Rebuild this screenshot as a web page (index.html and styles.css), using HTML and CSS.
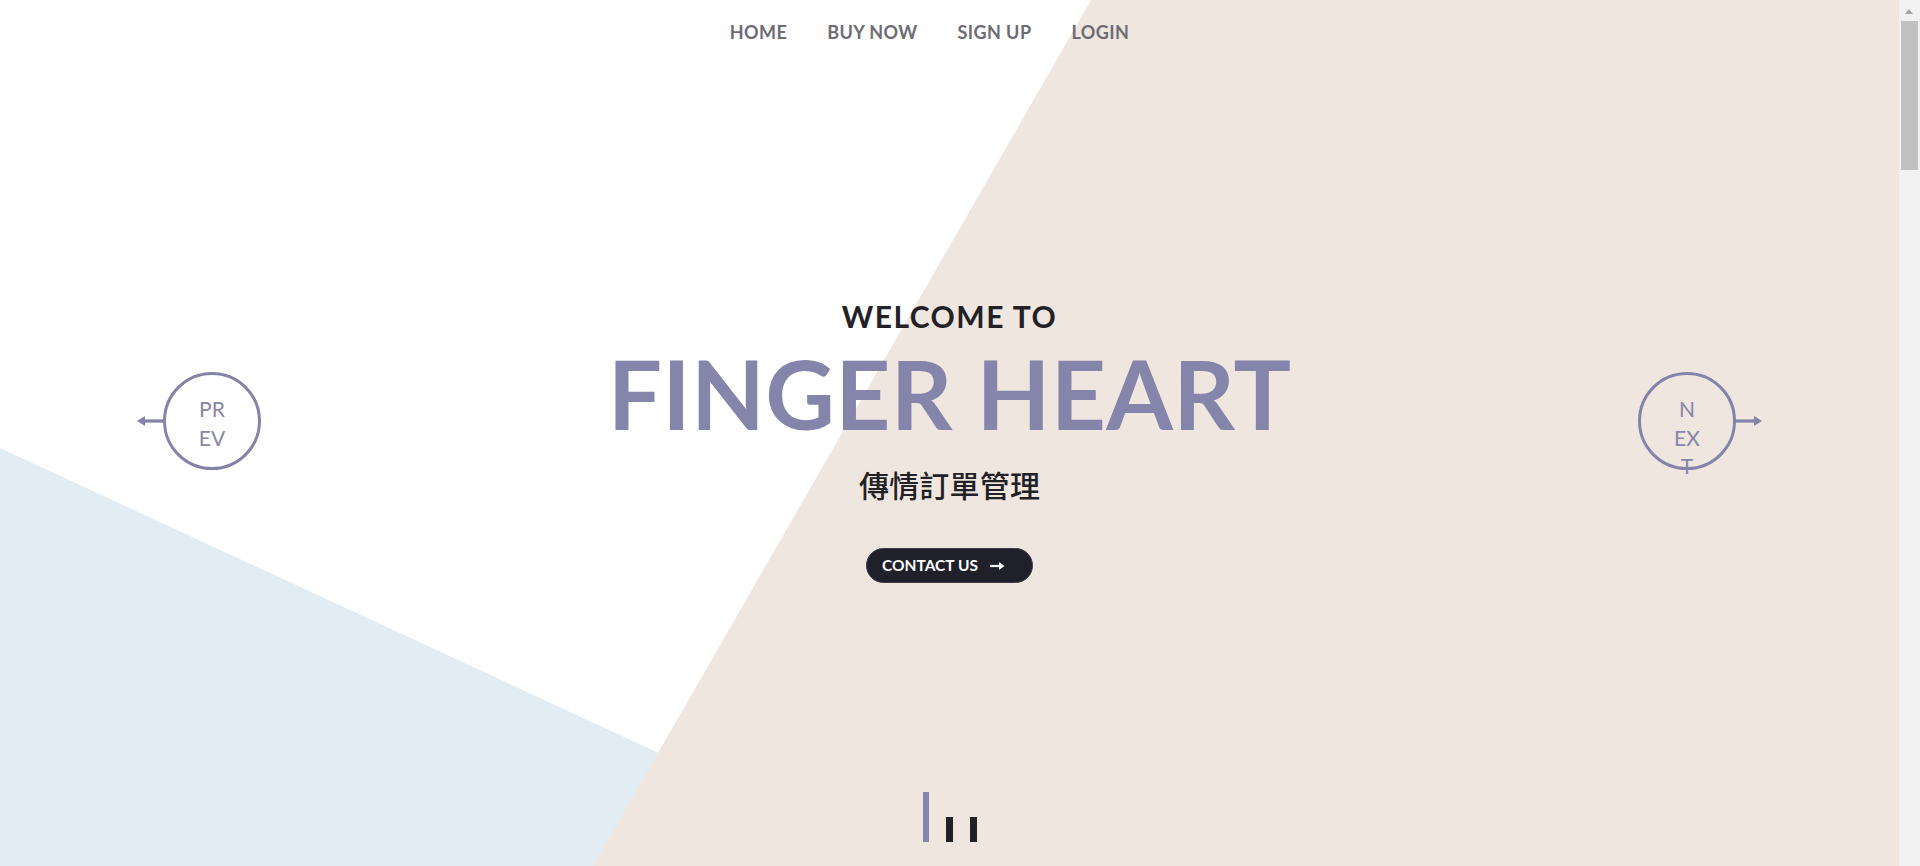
FILE: index.html
```html
<!DOCTYPE html>
<html lang="zh-Hant">
<head>
<meta charset="utf-8">
<title>Finger Heart</title>
<link rel="stylesheet" href="styles.css">
</head>
<body>
<div class="page">
<main class="hero">
  <nav class="nav">
    <ul class="nav-list">
      <li class="nav-item"><a class="nav-link" href="#">HOME</a></li>
      <li class="nav-item"><a class="nav-link" href="#">BUY NOW</a></li>
      <li class="nav-item"><a class="nav-link" href="#">SIGN UP</a></li>
      <li class="nav-item"><a class="nav-link" href="#">LOGIN</a></li>
    </ul>
  </nav>

  <div class="slide">
    <h2 class="welcome">WELCOME TO</h2>
    <h1 class="title">FINGER HEART</h1>
    <p class="subtitle">傳情訂單管理</p>
    <a class="btn" href="#"><span class="btn-text">CONTACT US</span>
      <svg class="btn-arrow" width="15" height="10" viewBox="0 0 15 10"><path d="M0 5H11" stroke="#fff" stroke-width="2.2"/><path d="M9 1L14.5 5L9 9Z" fill="#fff"/></svg>
    </a>
  </div>

  <a class="ctrl ctrl-prev" href="#">
    <svg class="ctrl-arrow" width="28" height="12" viewBox="0 0 28 12"><path d="M7 6H28" stroke="#8583a9" stroke-width="3.2"/><path d="M0 6L8 1V11Z" fill="#8583a9"/></svg>
    <span class="ctrl-text"><span class="ctrl-line">PR</span><span class="ctrl-line">EV</span></span>
  </a>
  <a class="ctrl ctrl-next" href="#">
    <span class="ctrl-text"><span class="ctrl-line">N</span><span class="ctrl-line">EX</span><span class="ctrl-line">T</span></span>
    <svg class="ctrl-arrow" width="28" height="12" viewBox="0 0 28 12"><path d="M0 6H21" stroke="#8583a9" stroke-width="3.2"/><path d="M28 6L20 1V11Z" fill="#8583a9"/></svg>
  </a>

  <div class="dots">
    <span class="dot dot-active"></span>
    <span class="dot"></span>
    <span class="dot"></span>
  </div>
</main>
<aside class="scrollbar" aria-hidden="true">
  <span class="sb-arrow"></span>
  <span class="sb-thumb"></span>
</aside>
</div>
</body>
</html>
```

FILE: styles.css
```css
html, body {
  margin: 0;
  padding: 0;
}
body {
  font-family: "Lato", "Noto Sans CJK TC", sans-serif;
  background: #ffffff;
  color: #222226;
  overflow: hidden;
}
.page {
  display: flex;
  height: 866px;
}
.hero {
  position: relative;
  flex: 1;
  height: 866px;
  overflow: hidden;
  background: #ffffff;
}
.hero::before,
.hero::after {
  content: "";
  position: absolute;
  inset: 0;
  pointer-events: none;
}
.hero::before {
  background: #e1edf3;
  clip-path: polygon(0 448px, 903px 866px, 0 866px);
}
.hero::after {
  background: #efe6df;
  clip-path: polygon(1091px 0, 100% 0, 100% 100%, 593px 100%);
}
.nav,
.slide,
.ctrl,
.dots {
  position: relative;
  z-index: 1;
}
.nav {
  padding-top: 20px;
}
.nav-list {
  list-style: none;
  margin: 0;
  padding: 0;
  display: flex;
  justify-content: center;
}
.nav-item {
  margin-right: 40px;
}
.nav-link {
  display: block;
  font-size: 18px;
  line-height: 24px;
  font-weight: 700;
  color: #6d6c74;
  text-decoration: none;
  letter-spacing: 0.4px;
}
.slide {
  display: flex;
  flex-direction: column;
  align-items: center;
  padding-top: 254px;
}
.welcome {
  margin: 0;
  font-size: 30px;
  line-height: 36px;
  font-weight: 700;
  letter-spacing: 1.5px;
  color: #222226;
}
.title {
  margin: 11px 0 0;
  font-size: 96px;
  line-height: 96px;
  font-weight: 700;
  letter-spacing: 0.3px;
  color: #8585ab;
}
.subtitle {
  margin: 25px 0 0;
  font-family: "Noto Sans CJK TC", sans-serif;
  font-size: 30px;
  line-height: 36px;
  font-weight: 500;
  letter-spacing: 0.2px;
  color: #222226;
}
.btn {
  margin-top: 46px;
  display: inline-flex;
  align-items: center;
  gap: 12px;
  height: 35px;
  box-sizing: border-box;
  padding: 0 27px 0 15px;
  border-radius: 18px;
  background: #1f2029;
  border: 1px solid #3a3c48;
  color: #ffffff;
  text-decoration: none;
  font-size: 15.5px;
  font-weight: 700;
}
.btn-text {
  line-height: 1;
  padding-top: 1px;
}
.ctrl {
  position: absolute;
  top: 372px;
  width: 98px;
  height: 98px;
  box-sizing: border-box;
  border: 3px solid #8583a9;
  border-radius: 50%;
  color: #8583a9;
  text-decoration: none;
  display: flex;
  justify-content: center;
}
.ctrl-prev {
  left: 163px;
}
.ctrl-next {
  right: 163px;
}
.ctrl-text {
  display: flex;
  flex-direction: column;
  align-items: center;
  padding-top: 20px;
  font-size: 21px;
  line-height: 28.5px;
  font-weight: 400;
  color: #8785a9;
}
.ctrl-line {
  display: block;
}
.ctrl-arrow {
  position: absolute;
  top: 40px;
}
.ctrl-prev .ctrl-arrow {
  left: -29px;
}
.ctrl-next .ctrl-arrow {
  right: -29px;
}
.dots {
  position: absolute;
  left: 0;
  right: 0;
  bottom: 24px;
  display: flex;
  justify-content: center;
  align-items: flex-end;
  gap: 17px;
}
.dot {
  display: block;
  width: 7px;
  height: 25px;
  background: #222226;
}
.dot-active {
  width: 6px;
  height: 50px;
  background: #8585ab;
}
.scrollbar {
  position: relative;
  width: 21px;
  flex: none;
  background: #f1f1f1;
}
.sb-arrow {
  position: absolute;
  top: 9px;
  left: 6px;
  width: 0;
  height: 0;
  border-left: 4.5px solid transparent;
  border-right: 4.5px solid transparent;
  border-bottom: 5px solid #a3a3a3;
}
.sb-thumb {
  position: absolute;
  top: 21px;
  left: 2px;
  width: 17px;
  height: 149px;
  background: #c1c1c1;
}
```
